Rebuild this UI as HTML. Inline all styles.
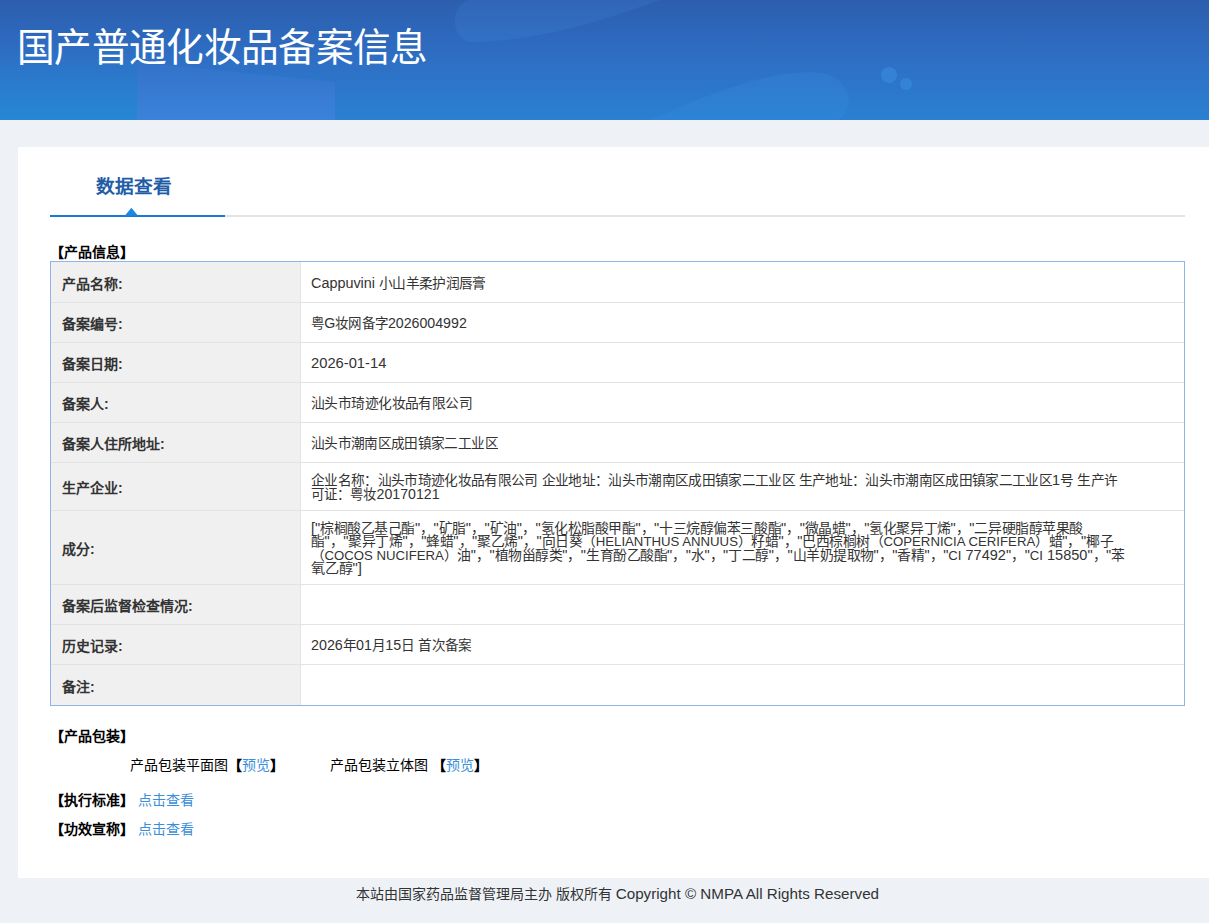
<!DOCTYPE html>
<html lang="zh-CN"><head><meta charset="utf-8">
<style>
html,body{margin:0;padding:0;}
html{overflow:hidden;width:1209px;height:923px;}
body{width:1235px;height:923px;overflow:hidden;background:#eef2f7;font-family:"Liberation Sans",sans-serif;position:relative;color:#333;}
#hdr{position:absolute;left:0;top:0;width:1235px;height:120px;overflow:hidden;background:linear-gradient(180deg,#2c5eae 0%,#2e6fc5 50%,#2a80d2 100%);}
#title{position:absolute;left:17px;top:21.5px;transform-origin:0 0;transform:scale(1.009,1.035);font-size:37.33px;line-height:50px;color:#fff;white-space:nowrap;}
#panel{position:absolute;left:18px;top:147px;width:1199px;height:731px;background:#fff;}
.abs{position:absolute;white-space:nowrap;}
#tab{left:96px;top:173px;font-size:18.67px;line-height:28px;font-weight:bold;color:#1f5ea7;}
#gline{position:absolute;left:50px;top:215px;width:1135px;height:2px;background:#e3e3e3;}
#bline{position:absolute;left:50px;top:215px;width:175px;height:2px;background:#1679d4;}
.sec{font-size:14px;font-weight:bold;color:#000;line-height:20px;}
#tbl{position:absolute;left:50px;top:261px;width:1133px;height:443px;border:1px solid #8fb4ea;background:#fff;}
#lcol{position:absolute;left:51px;top:262px;width:249px;height:443px;background:#f0f0f0;}
#vdiv{position:absolute;left:300px;top:262px;width:1px;height:443px;background:#e3e3e3;}
.sep{position:absolute;left:51px;width:1133px;height:1px;background:#e3e3e3;}
.lab{position:absolute;left:62px;font-size:14px;line-height:20px;font-weight:bold;color:#333;white-space:nowrap;}
.val{position:absolute;left:311px;font-size:13.33px;line-height:13.33px;color:#333;white-space:nowrap;transform-origin:0 0;}
.e{font-size:14px;}
.u{font-size:12.7px;}
#foot{left:0;width:1235px;top:883.5px;text-align:center;font-size:14px;line-height:20px;color:#333;}
a{text-decoration:none;color:#3b8ed9;}
</style></head><body>
<div id="hdr"><svg width="1235" height="120" style="position:absolute;left:0;top:0">
<defs><linearGradient id="pg" x1="0" y1="0" x2="0" y2="1"><stop offset="0" stop-color="#3372c9"/><stop offset="1" stop-color="#3b82db"/></linearGradient></defs>
<defs><linearGradient id="lg" x1="0" y1="0" x2="0" y2="1"><stop offset="0" stop-color="#1e96dc" stop-opacity="0"/><stop offset="1" stop-color="#1e96dc" stop-opacity="0.3"/></linearGradient></defs>
<rect x="0" y="40" width="137" height="80" fill="url(#lg)"/>
<path d="M137 62 L335 82 L335 120 L137 120 Z" fill="url(#pg)"/>
<path d="M470 42 C452 40 448 8 468 0 L660 0 C610 18 540 42 470 42 Z" fill="#4f95e6" fill-opacity="0.16"/>
<path d="M650 120 C700 98 760 72 812 72 C850 72 858 108 838 120 Z" fill="#3a92e4" fill-opacity="0.22"/>
<circle cx="889" cy="75" r="8" fill="#3f98ec" fill-opacity="0.4"/>
<circle cx="906" cy="84" r="6" fill="#3f98ec" fill-opacity="0.4"/>
</svg><div id="title">国产普通化妆品备案信息</div></div>
<div id="panel"></div>
<div class="abs" id="tab">数据查看</div>
<div id="gline"></div><div id="bline"></div><svg style="position:absolute;left:0;top:0" width="300" height="230"><polygon points="125,215.5 131.4,207.8 137.8,215.5" fill="#1f86e3"/></svg>
<div class="abs sec" style="left:50px;top:242px;">【产品信息】</div>
<div id="tbl"></div><div id="lcol"></div><div id="vdiv"></div>
<div class="sep" style="top:302px"></div><div class="sep" style="top:342px"></div><div class="sep" style="top:382px"></div><div class="sep" style="top:422px"></div><div class="sep" style="top:462px"></div><div class="sep" style="top:510px"></div><div class="sep" style="top:584px"></div><div class="sep" style="top:624px"></div><div class="sep" style="top:664px"></div>
<div class="lab" style="top:273.80px">产品名称:</div>
<div class="val" style="top:276.83px;transform:scaleX(1.028)"><span class="e">Cappuvini</span> 小山羊柔护润唇膏</div>
<div class="lab" style="top:314.30px">备案编号:</div>
<div class="val" style="top:317.33px;transform:scaleX(1.0132)">粤<span class="e">G</span>妆网备字<span class="e">2026004992</span></div>
<div class="lab" style="top:354.30px">备案日期:</div>
<div class="val" style="top:357.33px;transform:scaleX(1.0522)"><span class="e">2026-01-14</span></div>
<div class="lab" style="top:394.30px">备案人:</div>
<div class="val" style="top:397.33px;transform:scaleX(1.0327)">汕头市琦迹化妆品有限公司</div>
<div class="lab" style="top:434.30px">备案人住所地址:</div>
<div class="val" style="top:437.33px;transform:scaleX(1.0267)">汕头市潮南区成田镇家二工业区</div>
<div class="lab" style="top:478.30px">生产企业:</div>
<div class="val" style="top:474.17px;transform:scaleX(1.0259)">企业名称：汕头市琦迹化妆品有限公司 企业地址：汕头市潮南区成田镇家二工业区 生产地址：汕头市潮南区成田镇家二工业区<span class="e">1</span>号 生产许</div>
<div class="val" style="top:487.50px;transform:scaleX(1.0096)">可证：粤妆<span class="e">20170121</span></div>
<div class="lab" style="top:539.30px">成分:</div>
<div class="val" style="top:521.84px;transform:scaleX(1.0405)"><span class="e">["</span>棕榈酸乙基己酯<span class="e">"</span>，<span class="e">"</span>矿脂<span class="e">"</span>，<span class="e">"</span>矿油<span class="e">"</span>，<span class="e">"</span>氢化松脂酸甲酯<span class="e">"</span>，<span class="e">"</span>十三烷醇偏苯三酸酯<span class="e">"</span>，<span class="e">"</span>微晶蜡<span class="e">"</span>，<span class="e">"</span>氢化聚异丁烯<span class="e">"</span>，<span class="e">"</span>二异硬脂醇苹果酸</div>
<div class="val" style="top:535.17px;transform:scaleX(1.0397)">酯<span class="e">"</span>，<span class="e">"</span>聚异丁烯<span class="e">"</span>，<span class="e">"</span>蜂蜡<span class="e">"</span>，<span class="e">"</span>聚乙烯<span class="e">"</span>，<span class="e">"</span>向日葵（<span class="u">HELIANTHUS ANNUUS</span>）籽蜡<span class="e">"</span>，<span class="e">"</span>巴西棕榈树（<span class="u">COPERNICIA CERIFERA</span>）蜡<span class="e">"</span>，<span class="e">"</span>椰子</div>
<div class="val" style="top:548.50px;transform:scaleX(1.0385)">（<span class="u">COCOS NUCIFERA</span>）油<span class="e">"</span>，<span class="e">"</span>植物甾醇类<span class="e">"</span>，<span class="e">"</span>生育酚乙酸酯<span class="e">"</span>，<span class="e">"</span>水<span class="e">"</span>，<span class="e">"</span>丁二醇<span class="e">"</span>，<span class="e">"</span>山羊奶提取物<span class="e">"</span>，<span class="e">"</span>香精<span class="e">"</span>，<span class="e">"</span><span class="u">CI</span><span class="e"> 77492"</span>，<span class="e">"</span><span class="u">CI</span><span class="e"> 15850"</span>，<span class="e">"</span>苯</div>
<div class="val" style="top:561.83px;transform:scaleX(1.063)">氧乙醇<span class="e">"]</span></div>
<div class="lab" style="top:596.30px">备案后监督检查情况:</div>
<div class="lab" style="top:636.30px">历史记录:</div>
<div class="val" style="top:639.34px;transform:scaleX(1.0213)"><span class="e">2026</span>年<span class="e">01</span>月<span class="e">15</span>日 首次备案</div>
<div class="lab" style="top:676.80px">备注:</div>
<div class="abs sec" style="left:50px;top:726px;">【产品包装】</div>
<div class="abs" style="left:130px;top:755px;font-size:14px;line-height:20px;color:#000;">产品包装平面图<b>【</b><a>预览</a><b>】</b></div>
<div class="abs" style="left:330px;top:755px;font-size:14px;line-height:20px;color:#000;">产品包装立体图 <b>【</b><a>预览</a><b>】</b></div>
<div class="abs sec" style="left:50px;top:790px;">【执行标准】 <a style="font-weight:normal">点击查看</a></div>
<div class="abs sec" style="left:50px;top:819px;">【功效宣称】 <a style="font-weight:normal">点击查看</a></div>
<div class="abs" id="foot">本站由国家药品监督管理局主办 版权所有 <span style="font-size:15.2px">Copyright © NMPA All Rights Reserved</span></div>
</body></html>
